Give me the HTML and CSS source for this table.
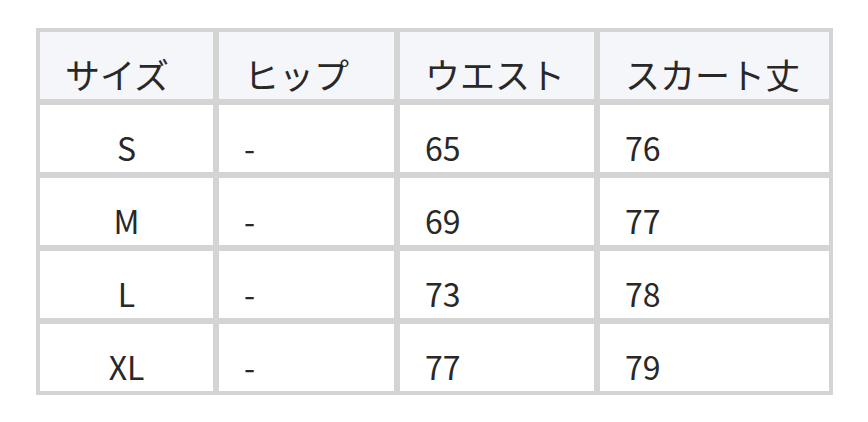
FILE: index.html
```html
<!DOCTYPE html>
<html lang="ja">
<head>
<meta charset="utf-8">
<link rel="stylesheet" href="styles.css">
</head>
<body>
<div class="table">
  <div class="cell head">サイズ</div>
  <div class="cell head">ヒップ</div>
  <div class="cell head">ウエスト</div>
  <div class="cell head">スカート丈</div>

  <div class="cell size">S</div>
  <div class="cell">-</div>
  <div class="cell">65</div>
  <div class="cell">76</div>

  <div class="cell size">M</div>
  <div class="cell">-</div>
  <div class="cell">69</div>
  <div class="cell">77</div>

  <div class="cell size">L</div>
  <div class="cell">-</div>
  <div class="cell">73</div>
  <div class="cell">78</div>

  <div class="cell size">XL</div>
  <div class="cell">-</div>
  <div class="cell">77</div>
  <div class="cell">79</div>
</div>
</body>
</html>
```

FILE: styles.css
```css
html, body {
  margin: 0;
  padding: 0;
  background: #ffffff;
}
body {
  padding: 28px 0 0 36px;
  font-family: "Noto Sans CJK JP", "Noto Sans", sans-serif;
  font-weight: 400;
  color: #282828;
}
.table {
  display: grid;
  grid-template-columns: 173px 175px 194px 229px;
  grid-auto-rows: 67px;
  gap: 6px;
  padding: 4px;
  width: max-content;
  background: #d4d4d4;
}
.cell {
  background: #ffffff;
  display: flex;
  align-items: flex-end;
  padding: 0 0 9px 25px;
  font-size: 32px;
  line-height: 1;
}
.head {
  background: #f5f6fa;
  font-size: 35px;
  padding-bottom: 8px;
}
.size {
  justify-content: center;
  padding-left: 0;
}
```
